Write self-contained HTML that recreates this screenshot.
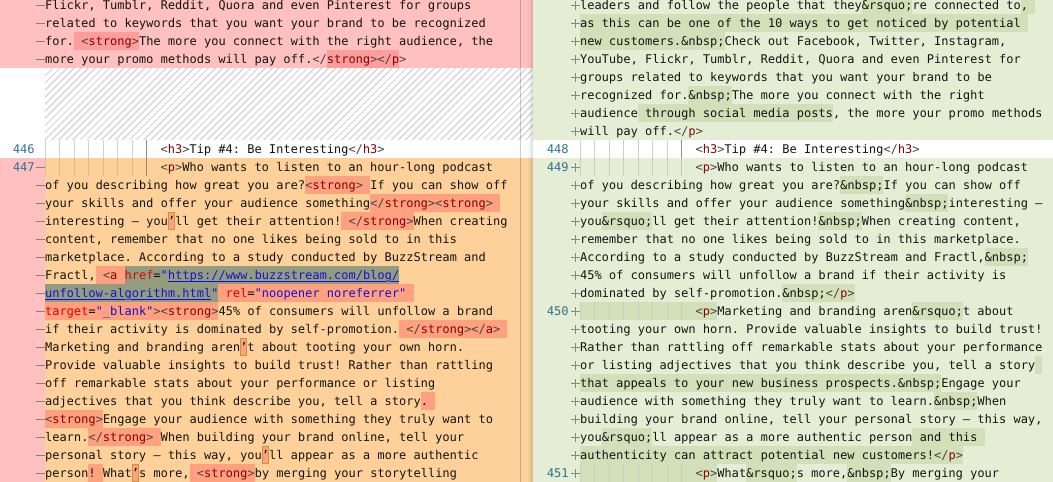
<!DOCTYPE html>
<html lang="en"><head><meta charset="utf-8"><title>Diff</title>
<style>
html,body{margin:0;padding:0;width:1053px;height:482px;overflow:hidden;background:#fff}
body{position:relative;font-family:"DejaVu Sans Mono","Liberation Mono",monospace;font-size:12px;line-height:18px;color:#111;text-rendering:geometricPrecision}
.pane{position:absolute;top:-4px}
#L{left:0;width:533px}
#R{left:533px;width:520px;background:#e6edd5;box-shadow:-2px 0 4px rgba(0,0,0,.16);height:490px}
.r{position:relative;height:18px;white-space:pre;box-sizing:border-box}
#L .r{padding-left:45px}
#R .r{padding-left:47px}
.del{background:#ffc0c0}
.chg{background:linear-gradient(90deg,#ffc0c0 0 45px,#fed19b 45px)}
.w{background:#fff}
.hatch{height:72px;background:#fff;position:relative}
.hatch:before{content:"";position:absolute;left:45px;right:0;top:0;bottom:0;background:repeating-linear-gradient(135deg,#d4d4d4 0 1.3px,#fff 1.3px 5px)}
#L .m:before{content:"";position:absolute;left:36px;top:9px;width:9px;height:1px;background:#8a8078}
#R .p:before{content:"";position:absolute;left:38px;top:9px;width:9px;height:1px;background:#858a7c}
#R .p:after{content:"";position:absolute;left:42px;top:5px;width:1px;height:9px;background:#858a7c}
.ln{position:absolute;top:0;width:40px;text-align:right;color:#2e7291}
#L .ln{left:-5.5px}
#R .ln{left:-4.5px}
.gd{position:absolute;top:0;height:18px;width:116px}
#L .gd{left:45px}
#R .gd{left:47px}
.gd i{position:absolute;top:0;height:18px;width:1px;background:#cfcfcf}
.gd i:nth-child(1){left:0}.gd i:nth-child(2){left:14.4px}.gd i:nth-child(3){left:29px}.gd i:nth-child(4){left:43.3px}.gd i:nth-child(5){left:58px}.gd i:nth-child(6){left:72.2px}.gd i:nth-child(7){left:87px}.gd i:nth-child(8){left:101.2px;background:#8d8d8d}
.chg .gd i{background:#e3b985}.chg .gd i:nth-child(8){background:#a08a6c}
.grn .gd i{background:#c9cfb8}.grn .gd i:nth-child(8){background:#c4cab2}
.in{position:relative;padding-left:115.5px}
.h,.v,.k,.o{display:inline-block;height:18px;vertical-align:top}
.h{background:#ffa07f}
.dh{background:#ff9c9c}
.k{background:#949c80}
.v{background:#d3dfb8}
.o{position:relative;background:#ffa07f;box-shadow:inset 0 0 0 1px #c9943d}
.n{color:#800000;font-style:normal}
.a{color:#e00000;font-style:normal}
.s{color:#1010d8;font-style:normal}
.u{color:#1010d8;font-style:normal;text-decoration:underline;text-underline-offset:2px}
.x{color:#444;font-style:normal}
#bar{position:absolute;left:520px;top:0;width:1px;height:482px;background:rgba(0,0,0,.2)}
</style></head><body>

<div class="pane" id="L">
<div class="r del m">Flickr, Tumblr, Reddit, Quora and even Pinterest for groups</div>
<div class="r del m">related to keywords that you want your brand to be recognized</div>
<div class="r del m">for.<span class="h dh"> <i class="x">&lt;</i><i class="n">strong</i><i class="x">&gt;</i></span>The more you connect with the right audience, the</div>
<div class="r del m">more your promo methods will pay off.<i class="x">&lt;/</i><span class="h dh"><i class="n">strong</i><i class="x">&gt;&lt;/</i><i class="n">p</i></span><i class="x">&gt;</i></div>
<div class="hatch"></div>
<div class="r w"><span class="ln">446</span><div class="gd"><i></i><i></i><i></i><i></i><i></i><i></i><i></i><i></i></div><span class="in"><i class="x">&lt;</i><i class="n">h3</i><i class="x">&gt;</i>Tip #4: Be Interesting<i class="x">&lt;/</i><i class="n">h3</i><i class="x">&gt;</i></span></div>
<div class="r chg m"><span class="ln">447</span><div class="gd"><i></i><i></i><i></i><i></i><i></i><i></i><i></i><i></i></div><span class="in"><i class="x">&lt;</i><i class="n">p</i><i class="x">&gt;</i>Who wants to listen to an hour-long podcast</span></div>
<div class="r chg m">of you describing how great you are?<span class="h"><i class="x">&lt;</i><i class="n">strong</i><i class="x">&gt;</i> </span>If you can show off</div>
<div class="r chg m">your skills and offer your audience something<span class="h"><i class="x">&lt;/</i><i class="n">strong</i><i class="x">&gt;&lt;</i><i class="n">strong</i><i class="x">&gt;</i> </span></div>
<div class="r chg m">interesting – you<span class="o">’</span>ll get their attention!<span class="h"> <i class="x">&lt;/</i><i class="n">strong</i><i class="x">&gt;</i></span>When creating</div>
<div class="r chg m">content, remember that no one likes being sold to in this</div>
<div class="r chg m">marketplace. According to a study conducted by BuzzStream and</div>
<div class="r chg m">Fractl,<span class="h"> <i class="x">&lt;</i><i class="n">a</i> </span><span class="k"><i class="a">href</i>=<i class="s">"</i><i class="u">https://www.buzzstream.com/blog/</i></span></div>
<div class="r chg m"><span class="k"><i class="u">unfollow-algorithm.html</i><i class="s">"</i></span><span class="h"> <i class="a">rel</i>=<i class="s">"noopener noreferrer"</i> </span></div>
<div class="r chg m"><span class="h"><i class="a">target</i>=<i class="s">"_blank"</i><i class="x">&gt;&lt;</i><i class="n">strong</i><i class="x">&gt;</i></span>45% of consumers will unfollow a brand</div>
<div class="r chg m">if their activity is dominated by self-promotion.<span class="h"> <i class="x">&lt;/</i><i class="n">strong</i><i class="x">&gt;&lt;/</i><i class="n">a</i><i class="x">&gt;</i> </span></div>
<div class="r chg m">Marketing and branding aren<span class="o">’</span>t about tooting your own horn.</div>
<div class="r chg m">Provide valuable insights to build trust! Rather than rattling</div>
<div class="r chg m">off remarkable stats about your performance or listing</div>
<div class="r chg m">adjectives that you think describe you, tell a story<span class="h">. </span></div>
<div class="r chg m"><span class="h"><i class="x">&lt;</i><i class="n">strong</i><i class="x">&gt;</i></span>Engage your audience with something they truly want to</div>
<div class="r chg m">learn.<span class="h"><i class="x">&lt;/</i><i class="n">strong</i><i class="x">&gt;</i> </span>When building your brand online, tell your</div>
<div class="r chg m">personal story – this way, you<span class="o">’</span>ll appear as a more authentic</div>
<div class="r chg m">person<span class="h">! </span>What<span class="o">’</span>s more,<span class="h"> <i class="x">&lt;</i><i class="n">strong</i><i class="x">&gt;</i></span>by merging your storytelling</div>
</div>

<div id="bar"></div>

<div class="pane" id="R">
<div class="r p">leaders and follow the people that they<span class="v">&amp;rsquo;</span>re connected to<span class="v">, </span></div>
<div class="r p"><span class="v">as this can be one of the 10 ways to get noticed by potential </span></div>
<div class="r p"><span class="v">new customers.&amp;nbsp;</span>Check out Facebook, Twitter, Instagram,</div>
<div class="r p">YouTube, Flickr, Tumblr, Reddit, Quora and even Pinterest for</div>
<div class="r p">groups related to keywords that you want your brand to be</div>
<div class="r p">recognized for.<span class="v">&amp;nbsp;</span>The more you connect with the right</div>
<div class="r p">audience<span class="v"> through social media posts</span>, the more your promo methods</div>
<div class="r p">will pay off.<i class="x">&lt;/</i><i class="n">p</i><i class="x">&gt;</i></div>
<div class="r w"><span class="ln">448</span><div class="gd"><i></i><i></i><i></i><i></i><i></i><i></i><i></i><i></i></div><span class="in"><i class="x">&lt;</i><i class="n">h3</i><i class="x">&gt;</i>Tip #4: Be Interesting<i class="x">&lt;/</i><i class="n">h3</i><i class="x">&gt;</i></span></div>
<div class="r p grn"><span class="ln">449</span><div class="gd"><i></i><i></i><i></i><i></i><i></i><i></i><i></i><i></i></div><span class="in"><i class="x">&lt;</i><i class="n">p</i><i class="x">&gt;</i>Who wants to listen to an hour-long podcast</span></div>
<div class="r p">of you describing how great you are?<span class="v">&amp;nbsp;</span>If you can show off</div>
<div class="r p">your skills and offer your audience something<span class="v">&amp;nbsp;</span>interesting –</div>
<div class="r p">you<span class="v">&amp;rsquo;</span>ll get their attention!<span class="v">&amp;nbsp;</span>When creating content,</div>
<div class="r p">remember that no one likes being sold to in this marketplace.</div>
<div class="r p">According to a study conducted by BuzzStream and Fractl,<span class="v">&amp;nbsp;</span></div>
<div class="r p">45% of consumers will unfollow a brand if their activity is</div>
<div class="r p">dominated by self-promotion.<span class="v">&amp;nbsp;<i class="x">&lt;/</i><i class="n">p</i><i class="x">&gt;</i></span></div>
<div class="r p grn"><span class="ln">450</span><span class="v" style="position:absolute;left:47px;width:115.5px"></span><div class="gd"><i></i><i></i><i></i><i></i><i></i><i></i><i></i><i></i></div><span class="in"><span class="v"><i class="x">&lt;</i><i class="n">p</i><i class="x">&gt;</i></span>Marketing and branding aren<span class="v">&amp;rsquo;</span>t about</span></div>
<div class="r p">tooting your own horn. Provide valuable insights to build trust!</div>
<div class="r p">Rather than rattling off remarkable stats about your performance</div>
<div class="r p">or listing adjectives that you think describe you, tell a story<span class="v"> </span></div>
<div class="r p"><span class="v">that appeals to your new business prospects.&amp;nbsp;</span>Engage your</div>
<div class="r p">audience with something they truly want to learn.<span class="v">&amp;nbsp;</span>When</div>
<div class="r p">building your brand online, tell your personal story – this way,</div>
<div class="r p">you<span class="v">&amp;rsquo;</span>ll appear as a more authentic person<span class="v"> and this </span></div>
<div class="r p"><span class="v">authenticity can attract potential new customers!<i class="x">&lt;/</i><i class="n">p</i><i class="x">&gt;</i></span></div>
<div class="r p grn"><span class="ln">451</span><span class="v" style="position:absolute;left:47px;width:115.5px"></span><div class="gd"><i></i><i></i><i></i><i></i><i></i><i></i><i></i><i></i></div><span class="in"><span class="v"><i class="x">&lt;</i><i class="n">p</i><i class="x">&gt;</i></span>What<span class="v">&amp;rsquo;</span>s more,<span class="v">&amp;nbsp;</span>By merging your</span></div>
</div>
</body></html>
